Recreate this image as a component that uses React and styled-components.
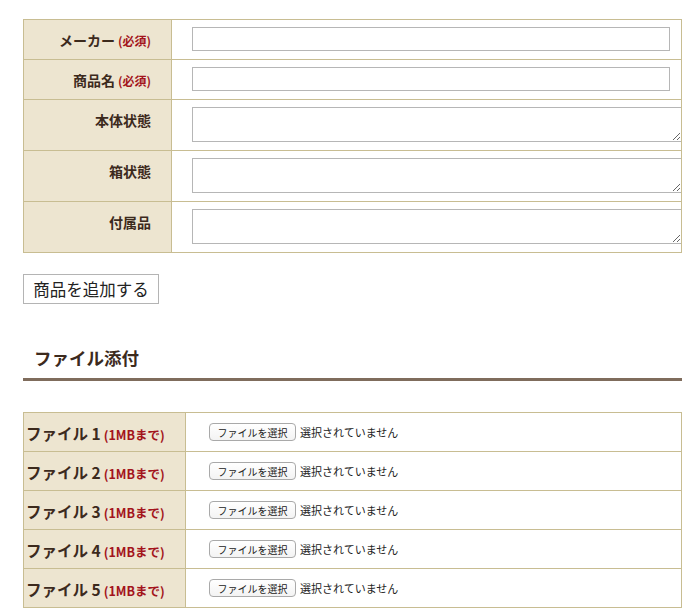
import React from 'react'
import styled, { createGlobalStyle } from 'styled-components'

const Global = createGlobalStyle`
  body {
    margin: 0;
    background: #fff;
    font-family: "Noto Sans CJK JP", "Noto Sans", sans-serif;
    color: #3c2a1d;
  }
`

const Page = styled.div`
  width: 659px;
  padding: 19px 0 0 23px;
`

const Table = styled.table`
  width: 659px;
  border-collapse: collapse;
  border: 1px solid #c8bd92;
  table-layout: fixed;
`

const Row = styled.tr`
  border-bottom: 1px solid #c8bd92;
`

const Label = styled.th`
  width: ${p => p.$w}px;
  background: #ede5d0;
  border-right: 1px solid #c8bd92;
  font-size: 14px;
  font-weight: 700;
  line-height: 20px;
  text-align: right;
  vertical-align: top;
  padding: 10px 20px 0 0;
  box-sizing: border-box;
  color: #3c2a1d;
  white-space: nowrap;
`

const Note = styled.span`
  font-size: ${p => p.$size || 12}px;
  color: #a3141c;
  font-weight: 700;
  margin-left: 3px;
`

const Field = styled.td`
  padding: 7px 0 8px 20px;
  vertical-align: top;
`

const TextInput = styled.input`
  display: block;
  box-sizing: border-box;
  width: 478px;
  height: 24px;
  border: 1px solid #b6b6b6;
  margin: 0;
  padding: 2px 4px;
`

const TextArea = styled.textarea`
  display: block;
  box-sizing: border-box;
  width: 490px;
  height: 35px;
  border: 1px solid #b6b6b6;
  margin: 0;
  padding: 2px 4px;
`

const AddButton = styled.button`
  display: block;
  margin-top: 21px;
  height: 30px;
  width: 136px;
  padding: 0;
  border: 1px solid #b4b4b4;
  background: #fff;
  font-family: "Noto Sans CJK JP", sans-serif;
  font-size: 16.5px;
  color: #222;
`

const Heading = styled.h2`
  margin: 41px 0 0;
  padding: 0 0 7px 11px;
  font-size: 17.5px;
  line-height: 26px;
  font-weight: 700;
  color: #3c2a1d;
  border-bottom: 3px solid #7f6c5c;
`

const FileTable = styled(Table)`
  margin-top: 31px;
`

const FileRow = styled.tr`
  height: 39px;
  border-bottom: 1px solid #c8bd92;
`

const FileLabel = styled.th`
  width: 162px;
  background: #ede5d0;
  border-right: 1px solid #c8bd92;
  font-size: 15.5px;
  font-weight: 700;
  text-align: left;
  vertical-align: middle;
  padding: 2px 0 0 2px;
  box-sizing: border-box;
  white-space: nowrap;
  color: #3c2a1d;
`

const FileCell = styled.td`
  padding: 0 0 0 23px;
  vertical-align: middle;
`

const Picker = styled.div`
  display: flex;
  align-items: center;
  gap: 4px;
`

const PickButton = styled.span`
  display: inline-flex;
  align-items: center;
  justify-content: center;
  width: 87px;
  height: 18px;
  box-sizing: border-box;
  border: 1px solid #a9a9a9;
  border-radius: 4px;
  background: linear-gradient(#fff, #f3f3f3);
  font-size: 10px;
  color: #222;
`

const Status = styled.span`
  font-size: 11px;
  color: #222;
`

const fields = [
  { label: 'メーカー', required: true, area: false },
  { label: '商品名', required: true, area: false },
  { label: '本体状態', area: true },
  { label: '箱状態', area: true },
  { label: '付属品', area: true },
]

export default function App() {
  return (
    <Page>
      <Global />
      <Table>
        <tbody>
          {fields.map(f => (
            <Row key={f.label}>
              <Label $w={148}>
                {f.label}
                {f.required && <Note>(必須)</Note>}
              </Label>
              <Field>{f.area ? <TextArea /> : <TextInput type="text" />}</Field>
            </Row>
          ))}
        </tbody>
      </Table>
      <AddButton>商品を追加する</AddButton>
      <Heading>ファイル添付</Heading>
      <FileTable>
        <tbody>
          {[1, 2, 3, 4, 5].map(n => (
            <FileRow key={n}>
              <FileLabel>
                ファイル {n}
                <Note $size={12.5}>(1MBまで)</Note>
              </FileLabel>
              <FileCell>
                <Picker>
                  <PickButton>ファイルを選択</PickButton>
                  <Status>選択されていません</Status>
                </Picker>
              </FileCell>
            </FileRow>
          ))}
        </tbody>
      </FileTable>
    </Page>
  )
}
